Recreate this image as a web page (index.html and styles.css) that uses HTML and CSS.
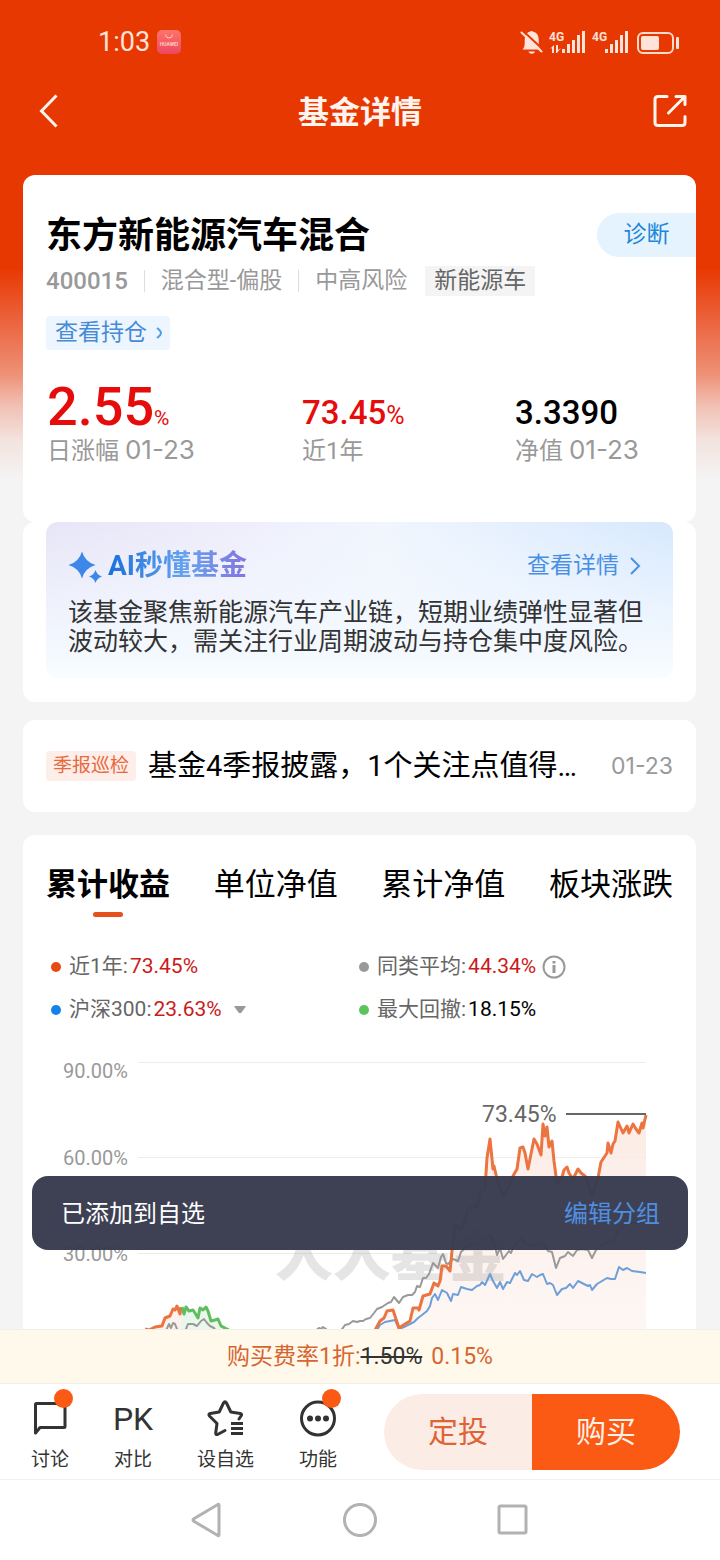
FILE: index.html
```html
<!DOCTYPE html>
<html lang="zh-CN">
<head>
<meta charset="utf-8">
<meta name="viewport" content="width=device-width, initial-scale=1">
<title>基金详情</title>
<link rel="stylesheet" href="styles.css">
</head>
<body>
<div class="app">
  <div class="page">
    <div class="status">
      <span class="clock">1:03</span>
      <svg class="badge" width="24" height="24" viewBox="0 0 24 24">
        <defs><linearGradient id="hw" x1="0" y1="0" x2="0" y2="1"><stop offset="0" stop-color="#ff7468"/><stop offset="1" stop-color="#ec4860"/></linearGradient></defs>
        <rect width="24" height="24" rx="5" fill="url(#hw)"/>
        <path d="M8.500 4.500a3.500 3.500 0 0 0 7 0" fill="none" stroke="#ffc9c0"/>
        <text x="12" y="16" text-anchor="middle" font-size="5" font-weight="700" fill="#ffc9c0">HUAWEI</text>
      </svg>
      <svg class="signals" width="160" height="26" viewBox="520 28 160 26" fill="#ffe3d8">
        <path d="M522.500 48.500c2-2 2.200-4 2.200-8.500 0-6 2-8.500 5-9.200q1.800-1.600 3.600 0c4 .9 5.500 4.200 5.500 9.200 0 4.500.4 6.500 2.200 8.500z"/>
        <path d="M528.500 50.500h6.500c-.8 3-5.700 3-6.500 0z"/>
        <path d="M522 29l21 19.500" stroke="#e83802" stroke-width="2"/>
        <path d="M521.500 31.500l20 19" stroke="#ffe3d8" stroke-width="2" stroke-linecap="round"/>
        <text x="549" y="40" font-size="12" font-weight="700">4G</text>
        <path d="M550 48l4-4v8h-2v-5zM556 44h2v5l3-2-4 5h-1z"/>
        <path d="M562 48h3v4h-3zM567 43h3v9h-3zM572 39h3v13h-3zM577 34h3v18h-3zM582 30h3v22h-3z"/>
        <text x="592" y="40" font-size="12" font-weight="700">4G</text>
        <path d="M605 48h3v4h-3zM610 43h3v9h-3zM615 39h3v13h-3zM620 34h3v18h-3zM625 30h3v22h-3z"/>
        <rect x="638" y="32" width="35" height="20" rx="5" fill="none" stroke="#ffd9cb" stroke-width="2"/>
        <rect x="641" y="35" width="18" height="14" rx="2"/>
        <rect x="676" y="36" width="3" height="12" rx="1"/>
      </svg>
    </div>
    <header class="topbar">
      <button class="icon-btn" aria-label="返回">
        <svg width="36" height="36" viewBox="0 0 36 36" fill="none" stroke="#fff4ee" stroke-width="3"><path d="M24.500 2.500L9.500 18l15 15.500"/></svg>
      </button>
      <h1>基金详情</h1>
      <button class="icon-btn" aria-label="分享">
        <svg width="36" height="36" viewBox="0 0 36 36" fill="none" stroke="#fff4ee" stroke-width="3" stroke-linejoin="round"><path d="M15 3.500H6q-3 0-3 3v23q0 3 3 3h24q3 0 3-3v-6M24 3.500h9v8M32 4.500L16.500 20" stroke-linecap="round"/></svg>
      </button>
    </header>

    <main class="cards">
      <section class="card summary">
        <div class="title-row">
          <h2>东方新能源汽车混合</h2>
          <button class="diagnose">诊断</button>
        </div>
        <div class="meta">
          <span class="code">400015</span>
          <span class="divided">混合型-偏股</span>
          <span class="divided">中高风险</span>
          <span class="sector">新能源车</span>
        </div>
        <a class="holdings" href="#">查看持仓
          <svg width="8" height="14" viewBox="0 0 8 14" fill="none" stroke="#4a9fe8" stroke-width="2"><path d="M2 2q4 3 4 5t-4 5"/></svg>
        </a>
        <dl class="stats">
          <div><dd class="big up">2.55<span class="unit">%</span></dd><dt>日涨幅 <span class="date">01-23</span></dt></div>
          <div><dd class="up">73.45<span class="pct">%</span></dd><dt>近1年</dt></div>
          <div><dd>3.3390</dd><dt>净值 <span class="date">01-23</span></dt></div>
        </dl>
      </section>

      <section class="card ai-card">
        <div class="ai">
          <div class="ai-head">
            <svg width="36" height="36" viewBox="0 0 36 36" fill="#3d87e8"><path d="M14 3.500q3 10.500 13.500 13.500Q17 20 14 30.500 11 20 .5 17 11 14 14 3.500z"/><path d="M27.500 22q1.500 5 6.500 6.500-5 1.500-6.500 6.500-1.500-5-6.500-6.500 5-1.500 6.500-6.500z"/></svg>
            <h3>AI秒懂基金</h3>
            <a href="#">查看详情
              <svg width="12" height="20" viewBox="0 0 12 20" fill="none" stroke="#4a90e2" stroke-width="2"><path d="M2 2l8 8-8 8"/></svg>
            </a>
          </div>
          <p>该基金聚焦新能源汽车产业链，短期业绩弹性显著但波动较大，需关注行业周期波动与持仓集中度风险。</p>
        </div>
      </section>

      <a class="card notice" href="#">
        <span class="notice-tag">季报巡检</span>
        <span class="notice-text">基金4季报披露，1个关注点值得…</span>
        <time>01-23</time>
      </a>

      <section class="card performance">
        <nav class="tabs">
          <button class="tab active">累计收益</button>
          <button class="tab">单位净值</button>
          <button class="tab">累计净值</button>
          <button class="tab">板块涨跌</button>
        </nav>
        <div class="legend">
          <div class="entry"><i class="dot red"></i><span>近1年:<b class="rise">73.45%</b></span></div>
          <div class="entry"><i class="dot gray"></i><span>同类平均:<b class="rise">44.34%</b></span>
            <svg class="info" width="24" height="24" viewBox="0 0 24 24" fill="none" stroke="#999" stroke-width="2"><circle cx="12" cy="12" r="10.500"/><path d="M12 10v8M12 6v2.500" stroke-width="3"/></svg>
          </div>
          <div class="entry"><i class="dot blue"></i><button class="index">沪深300:<b class="rise">23.63%</b>
            <svg width="12" height="8" viewBox="0 0 12 8" fill="#999"><path d="M1 0h10q1 0 .5 1L7.500 6.500q-1.500 1.500-3 0L.5 1Q0 0 1 0z"/></svg></button></div>
          <div class="entry"><i class="dot green"></i><span>最大回撤:<b>18.15%</b></span></div>
        </div>
        <svg class="chart" viewBox="46 1030 627 340" role="img" aria-label="累计收益走势">
          <defs>
            <linearGradient id="area" x1="0" y1="0" x2="0" y2="1"><stop offset="0" stop-color="#fbe6de"/><stop offset="1" stop-color="#fdf8f6"/></linearGradient>
          </defs>
          <path d="M138 1061.500H646M138 1156.500H646M138 1252.500H646" stroke="#ececec"/>
          <path fill="url(#area)" fill-opacity=".8" d="M375 1329L380 1320 387 1310 393 1309 399 1327 410 1320 413 1307 418 1307 423 1295 430 1293 434 1282 438 1285 442 1265 450 1270 452 1250 455 1225 462 1228 468 1208 477 1205 481 1190 485 1188 487 1157 490 1138 493 1168 497 1178 503 1195 508 1187 513 1175 517 1168 520 1147 523 1146 528 1168 534 1138 541 1154 543 1123 547 1126 549 1146 552 1140 554 1160 557 1183 567 1166 573 1178 578 1168 585 1175 592 1195 598 1177 603 1158 611 1152 615 1140 618 1121 623 1132 627 1125 633 1123 639 1132 646 1113V1370H375z"/>
          <path fill="#fdf1ed" d="M145 1330L155 1326 165 1317 173 1308 181 1308V1370H145z"/>
          <path fill="#eaf7ec" d="M181 1308L193 1310 198 1317 201 1306 207 1307 211 1320 218 1318 229 1330V1370H181z"/>
          <text class="watermark" x="275" y="1275">人人基金</text>
          <g fill="none" stroke-linejoin="round">
            <path stroke="#999" stroke-width="2" d="M164 1334L169 1323 171 1327 173 1322 175 1323 179 1333 184 1333 188 1323 193 1323 197 1325 201 1320 204 1318 207 1322 210 1325 214 1327 219 1335M315 1330L319 1327 321 1328 323 1326 330 1331 340 1331 345 1324 349 1323 353 1320 357 1321 360 1320 363 1320 366 1318 370 1317 374 1312 377 1308 382 1306 388 1302 391 1301 394 1296 399 1302 403 1296 408 1294 412 1294 415 1291 417 1285 420 1286 423 1277 426 1277 429 1273 433 1262 438 1267 441 1256 443 1253 446 1262 448 1263 453 1258 458 1260 461 1251 466 1246 472 1243 480 1242 486 1236 490 1233 495 1245 497 1254 500 1247 503 1258 506 1254 509 1250 511 1252 513 1247 520 1237 526 1243 532 1245 543 1242 548 1250 552 1251 556 1267 560 1257 565 1255 568 1251 573 1255 577 1249 582 1248 588 1249 592 1257 596 1249 600 1246 605 1242 613 1240 618 1230 627 1222 646 1222"/>
            <path stroke="#6d9fd8" stroke-width="2" d="M374 1334L380 1324 385 1321 395 1319 399 1328 404 1326 410 1323 414 1321 418 1317 422 1314 427 1310 430 1305 432 1297 435 1293 438 1299 442 1289 447 1292 451 1300 453 1293 458 1294 461 1286 467 1288 472 1289 477 1285 480 1284 482 1281 485 1284 490 1273 493 1280 497 1287 500 1281 503 1288 507 1281 510 1282 515 1272 517 1274 520 1270 524 1279 528 1280 532 1273 537 1276 540 1274 543 1273 547 1283 550 1282 553 1284 557 1294 562 1288 566 1287 570 1283 573 1287 578 1280 584 1283 588 1285 590 1284 592 1289 597 1283 607 1277 611 1278 615 1278 619 1266 623 1269 627 1267 632 1270 640 1271 646 1272"/>
            <path stroke="#ec7440" stroke-width="3" d="M145 1328L149 1329 155 1326 162 1325 165 1317 170 1315 173 1308 175 1309 177 1305 180 1313 181 1306M374 1331L380 1320 384 1317 387 1310 393 1309 399 1327 405 1323 410 1320 413 1307 418 1307 419 1309 423 1295 430 1293 434 1282 438 1285 440 1280 442 1265 446 1265 450 1270 452 1250 455 1225 462 1228 468 1208 477 1205 481 1190 485 1188 487 1157 490 1138 493 1168 494 1165 497 1178 503 1195 508 1187 513 1175 517 1168 520 1147 523 1146 525 1152 528 1168 534 1138 537 1143 541 1154 543 1123 545 1135 547 1126 549 1146 552 1140 554 1160 557 1183 562 1176 564 1169 567 1166 569 1172 573 1178 578 1168 581 1172 585 1175 592 1195 598 1177 601 1161 603 1158 607 1152 608 1142 611 1152 613 1143 615 1140 618 1121 623 1132 627 1125 629 1132 633 1123 636 1128 639 1132 642 1122 643 1127 646 1114"/>
            <path stroke="#62bd61" stroke-width="3" d="M182 1306L184 1313 186 1306 189 1310 193 1309 195 1312 198 1317 200 1307 203 1309 206 1306 208 1310 211 1320 215 1319 218 1318 221 1325 225 1327 229 1329"/>
            <path stroke="#666" stroke-width="2" d="M566 1113H646"/>
          </g>
          <g class="axis">
            <text x="63" y="1077">90.00%</text>
            <text x="63" y="1164">60.00%</text>
            <text x="63" y="1260">30.00%</text>
          </g>
          <text class="peak" x="482" y="1121">73.45%</text>
        </svg>
      </section>
    </main>
  </div>

  <footer class="dock">
    <div class="toast" role="status"><span>已添加到自选</span><a href="#">编辑分组</a></div>
    <p class="fee">购买费率1折:<del>1.50%</del><span>0.15%</span></p>
    <div class="actions">
      <button class="action">
        <svg width="38" height="40" viewBox="0 0 38 40" fill="none" stroke="#333" stroke-width="3" stroke-linejoin="round"><path d="M5.500 4.500h27.500q1 0 1 1v22q0 1-1 1H9L4.500 34V5.500q0-1 1-1z"/></svg>
        <span>讨论</span><i class="alert"></i>
      </button>
      <button class="action">
        <span class="pk">PK</span>
        <span>对比</span>
      </button>
      <button class="action">
        <svg width="38" height="40" viewBox="0 0 38 40" fill="none" stroke="#333" stroke-width="3" stroke-linejoin="round" stroke-linecap="round"><path d="M18 31.500l-7.500 4q-2 .5-1.800-1.500L10 24.500 2.500 17q-1.500-2 .7-2.500l9-1.500 4.300-9q1.500-2.500 3 0l4.300 9 9.500 1.500q2.200.5.700 2.500L32 20"/><path d="M24 24.500h12M24 29.500h12M24 34.500h12" stroke-linecap="butt"/></svg>
        <span>设自选</span>
      </button>
      <button class="action">
        <svg width="38" height="40" viewBox="0 0 38 40"><circle cx="19" cy="19.500" r="16.500" fill="none" stroke="#333" stroke-width="3"/><g fill="#333"><circle cx="11" cy="19.500" r="3"/><circle cx="19" cy="19.500" r="3"/><circle cx="27" cy="19.500" r="3"/></g></svg>
        <span>功能</span><i class="alert"></i>
      </button>
      <div class="trade">
        <button class="plan">定投</button>
        <button class="buy">购买</button>
      </div>
    </div>
    <nav class="system" aria-label="系统导航">
      <button aria-label="后退"><svg width="36" height="36" viewBox="0 0 36 36"><path d="M30 3v30q0 1-1.200.5L4.500 19q-1-1 0-2L28.800 2.500Q30 2 30 3z"/></svg></button>
      <button aria-label="主页"><svg width="36" height="36" viewBox="0 0 36 36"><circle cx="18" cy="18" r="15.500"/></svg></button>
      <button aria-label="最近任务"><svg width="36" height="36" viewBox="0 0 36 36"><rect x="4" y="4" width="27" height="27" rx="1.500"/></svg></button>
    </nav>
  </footer>
</div>
</body>
</html>
```

FILE: styles.css
```css
* { box-sizing: border-box; }

body {
  margin: 0;
  font-family: Roboto, "Noto Sans CJK SC", sans-serif;
  line-height: 1.4;
  color: #000;
}

h1, h2, h3, p, dl, dd, dt { margin: 0; }

button {
  margin: 0;
  padding: 0;
  border: 0;
  background: none;
  color: inherit;
  font: inherit;
}

a { color: inherit; text-decoration: none; }
svg { display: block; flex: none; }

.app {
  display: flex;
  flex-direction: column;
  height: 100vh;
  background: #f4f4f4;
}

.page {
  flex: 1;
  min-height: 0;
  overflow-y: auto;
  scrollbar-width: none;
  background: linear-gradient(#e83802 0, #e83802 268px, #ec6f4c 335px, #ee9278 375px, #f1bfb2 405px, #f3e3de 440px, #f4f4f4 480px);
}

/* Status bar and header */
.status {
  display: flex;
  align-items: center;
  height: 84px;
  padding: 0 40px 0 98px;
}

.clock { font-size: 27px; line-height: 32px; color: #ffe3d8; }
.badge { margin-left: 7px; }
.signals { margin-left: auto; }

.topbar {
  display: flex;
  align-items: center;
  justify-content: space-between;
  height: 54px;
  margin-bottom: 37px;
  padding: 0 32px;
}

.topbar h1 {
  padding-top: 4px;
  font-size: 31px;
  line-height: 44px;
  color: #fff4ee;
}

/* Cards */
.cards { padding: 0 24px 0 23px; }

.card {
  background: #fff;
  border-radius: 12px;
}

.summary { padding: 38px 23px 54px; }

.title-row {
  display: flex;
  align-items: center;
  justify-content: space-between;
  margin-right: -23px;
}

.title-row h2 { font-size: 36px; line-height: 46px; margin-bottom: -2px; }

.diagnose {
  width: 99px;
  height: 44px;
  border-radius: 22px 0 0 22px;
  background: #e5f3fe;
  color: #2186d8;
  font-size: 23px;
}

.meta {
  display: flex;
  align-items: center;
  margin-top: 9px;
  font-size: 23px;
  line-height: 30px;
  color: #999;
}

.code { font-size: 24px; font-weight: 500; }

.divided {
  display: flex;
  align-items: center;
}

.divided::before {
  content: "";
  width: 1px;
  height: 22px;
  margin: 0 16px;
  background: #ddd;
}

.sector {
  margin-left: 18px;
  padding: 0 9px;
  background: #f4f4f4;
  color: #666;
}

.holdings {
  display: inline-flex;
  align-items: center;
  gap: 8px;
  height: 34px;
  margin-top: 20px;
  padding: 0 7px 0 9px;
  border-radius: 4px;
  background: #edf5fe;
  color: #468ad8;
  font-size: 23px;
  line-height: 34px;
  vertical-align: top;
}

.stats {
  display: grid;
  grid-template-columns: 255fr 213fr 159fr;
  margin-top: 20px;
}

.stats > div { white-space: nowrap; padding-left: 1px; }

.stats dd {
  height: 64px;
  font-size: 33px;
  font-weight: 500;
  line-height: 86px;
}

.stats .big { font-size: 54px; line-height: 74px; }
.stats .up { color: #e60c0c; }

.unit, .pct { font-weight: 400; line-height: 24px; }
.unit { font-size: 21px; }
.pct { font-size: 25px; }

.stats dt {
  font-size: 24px;
  line-height: 34px;
  color: #999;
}

.date { font-family: Inter, sans-serif; font-size: 26px; line-height: 30px; }

/* AI digest */
.ai-card { padding: 0 23px 24px; }

.ai {
  padding: 24px 22px 22px;
  border-radius: 12px;
  background:
    linear-gradient(rgba(246, 250, 255, 0) 0, #f4f9ff 85%, #fafdff 100%),
    linear-gradient(80deg, #e6e4f7 0, #eeedfb 30%, #f1f6fe 55%, #d6e8fe 100%);
}

.ai-head { display: flex; align-items: center; height: 40px; }

.ai-head h3 {
  margin-left: 4px;
  background: linear-gradient(90deg, #1a70dc, #66a3ee 55%, #8475e0);
  background-clip: text;
  -webkit-background-clip: text;
  color: transparent;
  font-size: 28px;
  line-height: 40px;
}

.ai-head a {
  display: flex;
  align-items: center;
  gap: 10px;
  margin-left: auto;
  padding-right: 10px;
  color: #4a90e2;
  font-size: 23px;
}

.ai p {
  margin-top: 12px;
  color: #333;
  font-size: 25px;
  line-height: 29px;
}

/* Report notice */
.notice {
  display: flex;
  align-items: center;
  min-height: 92px;
  margin-top: 18px;
  padding: 0 23px;
}

.notice-tag {
  padding: 0 7px;
  border-radius: 4px;
  background: #feeee9;
  color: #e8693c;
  font-size: 19px;
  line-height: 30px;
}

.notice-text {
  flex: 1;
  min-width: 0;
  margin-left: 12px;
  overflow: hidden;
  font-size: 29px;
  line-height: 40px;
  text-overflow: ellipsis;
  white-space: nowrap;
}

.notice time {
  margin-left: 12px;
  color: #999;
  font-family: Inter, sans-serif;
  font-size: 23px;
}

/* Performance */
.performance { margin-top: 23px; padding: 28px 23px 0; }

.tabs { display: flex; justify-content: space-between; }

.tab {
  display: flex;
  flex-direction: column;
  align-items: center;
  font-size: 31px;
  line-height: 44px;
}

.tab::after {
  content: "";
  width: 30px;
  height: 5px;
  margin-top: 5px;
  border-radius: 3px;
}

.tab.active { font-weight: 700; }
.tab.active::after { background: #e5501c; }

.legend {
  display: grid;
  grid-template-columns: 308fr 314fr;
  margin-top: 28px;
  padding-left: 5px;
  color: #666;
  font-size: 21px;
  line-height: 43px;
}

.entry { display: flex; align-items: center; white-space: nowrap; }
.entry b { color: #000; font-weight: 400; margin-left: 2px; }
.entry .rise { color: #cb1a1a; }
.info { margin-left: 6px; }

.index { display: flex; align-items: center; }
.index svg { margin-left: 12px; }

.dot {
  width: 10px;
  height: 10px;
  margin-right: 8px;
  border-radius: 50%;
}

.dot.red { background: #e8490f; }
.dot.gray { background: #999; }
.dot.blue { background: #1482e8; }
.dot.green { background: #5cc45c; }

.chart { width: 100%; height: auto; }
.axis { fill: #999; font-size: 20px; }
.peak { fill: #666; font-size: 23px; }

.watermark {
  fill: #000;
  fill-opacity: 0.1;
  font-family: "Noto Sans CJK SC", sans-serif;
  font-size: 58px;
  font-weight: 900;
}

/* Bottom dock */
.dock { position: relative; background: #fff; }

.toast {
  position: absolute;
  right: 32px;
  bottom: calc(100% + 79px);
  left: 32px;
  display: flex;
  align-items: center;
  justify-content: space-between;
  height: 74px;
  padding: 3px 28px 0 29px;
  border-radius: 16px;
  background: rgba(56, 59, 78, 0.97);
  color: #fff;
  font-size: 24px;
}

.toast a { color: #4f8fe0; }

.fee {
  border: solid #f0efe9;
  border-width: 1px 0;
  background: #fff9ec;
  color: #d8652f;
  font-size: 23px;
  line-height: 53px;
  text-align: center;
}

.fee del { color: #333; }
.fee span { margin-left: 9px; }

.actions {
  display: flex;
  align-items: center;
  gap: 45px;
  height: 96px;
  padding: 0 40px 0 31px;
  border-bottom: 1px solid #f0f0f0;
}

.action {
  position: relative;
  display: flex;
  flex-direction: column;
  align-items: center;
  gap: 8px;
  padding-top: 8px;
  color: #333;
  font-size: 19px;
  line-height: 26px;
  white-space: nowrap;
}

.pk {
  margin: 0 -8px;
  font-size: 32px;
  line-height: 40px;
}

.alert {
  position: absolute;
  top: -2px;
  right: -4px;
  width: 19px;
  height: 19px;
  border-radius: 50%;
  background: #fa5a14;
}

.trade {
  display: flex;
  flex: 0 0 296px;
  margin-left: auto;
  overflow: hidden;
  border-radius: 38px;
}

.trade button { flex: 1; height: 76px; font-size: 30px; }
.plan { background: #fcece6; color: #dc6436; }
.buy { background: #fb5a14; color: #fff1e6; }

.system {
  display: flex;
  align-items: center;
  justify-content: center;
  gap: 117px;
  height: 80px;
}

.system svg { fill: none; stroke: #b2b2b2; stroke-width: 3; }
```
